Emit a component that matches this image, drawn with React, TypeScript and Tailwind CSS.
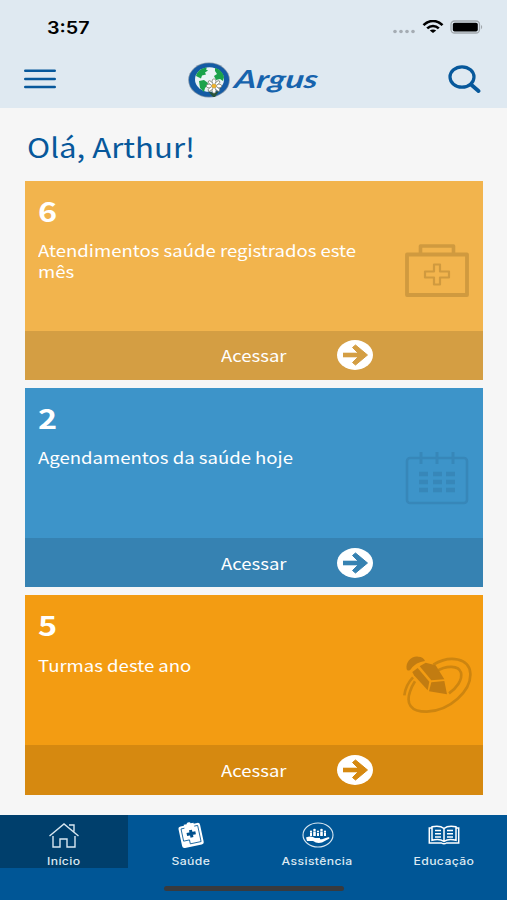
import type { ReactNode } from 'react'

type Card = {
  id: string
  total: number
  label: string
  bg: string
  footer: string
  arrow: string
  icon: ReactNode
}

function KitIcon() {
  return (
    <svg viewBox="0 0 64 54" className="w-16 h-[54px]" fill="none" stroke="#d09a3f" strokeLinejoin="round">
      <path d="M2 10.500h60v40.500H2z" strokeWidth="3.800" />
      <path d="M15.500 9V2h33v7" strokeWidth="3.600" />
      <path d="M29 20.500h6v7h9v6h-9v7h-6v-7h-9v-6h9z" strokeWidth="2.200" />
    </svg>
  )
}

function CalendarIcon() {
  return (
    <svg viewBox="0 0 64 54" className="w-16 h-[54px]" fill="none" stroke="#3787b9">
      <rect x="2" y="7" width="60" height="45" rx="3" strokeWidth="2.600" />
      <path d="M16 1v12M32 1v12M48 1v12" strokeWidth="3" />
      <path d="M14 23h9M28 23h9M41 23h9M14 31h9M28 31h9M41 31h9M14 39h9M28 39h9M41 39h9" strokeWidth="4.500" />
    </svg>
  )
}

function PencilIcon() {
  return (
    <svg viewBox="36 45 210 177" className="w-[70px] h-[59px] -mr-[3px] -mt-[3px]" fill="none">
      <g stroke="#cd8510" strokeWidth="8">
        <path d="M130 74C180 44 238 54 241 100c3 52-61 113-131 115-50 0-62-26-50-60 4-12 9-22 15-31" />
        <path d="M138 94c32-19 68-18 75 4 5 22-13 46-36 62M43 166c3-22 12-40 26-54" />
      </g>
      <g fill="#c27c11">
        <path d="M50 88C46 66 64 48 84 50c12 0 19 6 21 13-18 3-32 10-42 24-4 5-10 7-13 1z" />
        <path d="M89 79l18-11 30 8 26 42-39 3z" />
        <path d="M67 96l16-12 35 41-5 26-41-45z" />
        <path d="M124 127l39-4 8 40-54-9z" />
      </g>
    </svg>
  )
}

const CARDS: Card[] = [
  { id: 'atendimentos', total: 6, label: 'Atendimentos saúde registrados este mês', bg: 'bg-[#f2b44d]', footer: 'bg-[#d49e43]', arrow: 'text-[#d49e43]', icon: <KitIcon /> },
  { id: 'agendamentos', total: 2, label: 'Agendamentos da saúde hoje', bg: 'bg-[#3d94c9]', footer: 'bg-[#3682b2]', arrow: 'text-[#3682b2]', icon: <CalendarIcon /> },
  { id: 'turmas', total: 5, label: 'Turmas deste ano', bg: 'bg-[#f39c12]', footer: 'bg-[#d68910]', arrow: 'text-[#d68910]', icon: <PencilIcon /> },
]

function StatusBar() {
  return (
    <div className="h-[54px] pl-[47px] pr-6 flex items-center justify-between">
      <span className="inline-block pt-[3px] origin-left scale-x-[1.16] font-['Inter',sans-serif] text-[17px] font-semibold text-black">3:57</span>
      <div className="flex items-center">
        <svg viewBox="0 0 24 14" className="w-6 h-3.5 mr-1.5" fill="#a5acb3">
          <circle cx="3" cy="11.500" r="1.800" />
          <circle cx="9" cy="11.500" r="1.800" />
          <circle cx="15" cy="11.500" r="1.800" />
          <circle cx="21" cy="11.500" r="1.800" />
        </svg>
        <svg viewBox="0 0 22 14" className="w-[22px] h-3.5 mr-[6px]" fill="none" stroke="#000" strokeWidth="2.600">
          <path d="M1.500 5.200C7-.4 15-.4 20.500 5.200M5.200 8.400c3.400-3.300 8.200-3.300 11.600 0" />
          <path d="M11 13 7.800 10.500c1.900-1.500 4.500-1.500 6.400 0z" fill="#000" stroke="none" />
        </svg>
        <svg viewBox="0 0 33 14" className="w-[33px] h-3.5">
          <rect x="1" y="1" width="28.500" height="12" rx="3.500" fill="none" stroke="#a2a8ad" strokeWidth="1.300" />
          <rect x="2.800" y="2.700" width="25" height="8.800" rx="1.800" fill="#000" />
          <path d="M31 5c1.600.6 1.600 3.600 0 4.200z" fill="#a2a8ad" />
        </svg>
      </div>
    </div>
  )
}

function Logo() {
  return (
    <div className="flex items-center pl-[3px] pt-[2px]">
      <svg viewBox="0 0 42 36" className="w-[42px] h-9">
        <ellipse cx="21" cy="18" rx="20.800" ry="17.500" fill="#7f93a8" />
        <ellipse cx="21" cy="18" rx="20" ry="16.700" fill="#145ba4" />
        <ellipse cx="21.500" cy="17.500" rx="14.500" ry="12.300" fill="#eaf3f5" />
        <path d="M8 14c1-5 6-8 11-8.500l-1 2 2 1-3 2 1 2-4 1-1 3-2-1zM27 6c5 1 8 5 9 9l-1 4-3-2-4 1-2-4 3-2-2-3zM11 19l5-1 4 3-1 3-2 2-1 4-4-4z" fill="#1ba34a" />
        <path d="M20 29l5 2 6-2-4 6h-2z" fill="#28543a" />
        <g fill="#fff" stroke="#6b705f" strokeWidth=".7">
          <ellipse cx="26" cy="19.800" rx="2" ry="3" />
          <ellipse cx="26" cy="28.300" rx="2" ry="3" />
          <ellipse cx="21.300" cy="24" rx="3" ry="1.900" />
          <ellipse cx="30.700" cy="24" rx="3" ry="1.900" />
          <ellipse cx="22.600" cy="21" rx="2.900" ry="1.500" transform="rotate(42 22.600 21)" />
          <ellipse cx="29.400" cy="21" rx="2.900" ry="1.500" transform="rotate(-42 29.400 21)" />
          <ellipse cx="22.600" cy="27" rx="2.900" ry="1.500" transform="rotate(-42 22.600 27)" />
          <ellipse cx="29.400" cy="27" rx="2.900" ry="1.500" transform="rotate(42 29.400 27)" />
        </g>
        <ellipse cx="26" cy="24" rx="2.400" ry="2" fill="#efb22c" />
      </svg>
      <div className="w-[86px] pl-[5px] pb-[4px]">
        <span className="inline-block origin-left scale-x-[1.36] -skew-x-6 font-['Lato',sans-serif] text-[25px] leading-8 font-bold italic text-[#1763ad]">Argus</span>
      </div>
    </div>
  )
}

function Header() {
  return (
    <header className="h-[108px] bg-[#dfe9f1]">
      <StatusBar />
      <div className="h-[50px] pl-6 pr-[26px] flex items-center justify-between">
        <button type="button" title="Menu">
          <svg viewBox="0 0 32 20" className="w-8 h-5" stroke="#07589b" strokeWidth="2.600" strokeLinecap="round">
            <path d="M1.300 1.800h29.400M1.300 10h29.400M1.300 18h29.400" />
          </svg>
        </button>
        <Logo />
        <button type="button" title="Buscar">
          <svg viewBox="0 0 36 28" className="w-9 h-7" fill="none" stroke="#07589b" strokeLinecap="round">
            <ellipse cx="17" cy="12" rx="12" ry="10.200" strokeWidth="3.200" />
            <path d="m26 19.500 7.500 6.500" strokeWidth="3.800" />
          </svg>
        </button>
      </div>
    </header>
  )
}

function SummaryCard({ card }: { card: Card }) {
  return (
    <section className={`h-[199.300px] flex flex-col text-white ${card.bg}`}>
      <div className="h-[150px] pl-[13px] pr-[14px] flex justify-between">
        <div className="w-[285px] pt-[14px]">
          <p className="origin-left scale-x-[1.2] text-[27px] leading-8 font-bold">{card.total}</p>
          <p className="w-[280px] mt-[13.400px] origin-left scale-x-[1.16] text-[16px] leading-[21px]">{card.label}</p>
        </div>
        <div className="pt-[63px]">{card.icon}</div>
      </div>
      <button type="button" className={`flex-1 pl-[196px] flex items-center ${card.footer}`}>
        <span className="w-[116px] text-left">
          <span className="inline-block origin-left scale-x-[1.158] text-[16px] leading-6">Acessar</span>
        </span>
        <svg viewBox="0 0 36 30" className={`w-9 h-[30px] ${card.arrow}`}>
          <ellipse cx="18" cy="15" rx="18" ry="15" fill="#fff" />
          <path d="M6 15h18" fill="none" stroke="currentColor" strokeWidth="4.600" />
          <path d="M15.500 7.500 18.500 5 30.500 15 18.500 25 15.500 22.500 21 17v-4z" fill="currentColor" stroke="currentColor" strokeWidth="1" strokeLinejoin="round" />
        </svg>
      </button>
    </section>
  )
}

function HomeIcon() {
  return (
    <svg viewBox="0 0 32 26" className="w-8 h-[26px]" fill="none" stroke="#d8e7f1" strokeWidth="1.400">
      <path d="M1.500 14 16 2l14.500 12M21 3h5v6.500M5 14v11h7v-8h7v8h8V14" />
    </svg>
  )
}

function ClipboardIcon() {
  return (
    <svg viewBox="0 0 30 28" className="w-[30px] h-7">
      <g transform="rotate(-12 15 14)">
        <rect x="4" y="3.500" width="22" height="22" rx="2.500" fill="#fff" />
        <path d="M10 5V2.500h3c0-2 4-2 4 0h3V5z" fill="#fff" />
        <path d="M10 6H6.500v12.500h6v4h11V6H20" fill="none" stroke="#005696" strokeWidth=".8" />
        <path d="M15.500 9v7.500M11 12.700h9" stroke="#004f8c" strokeWidth="3" />
      </g>
    </svg>
  )
}

function AssistIcon() {
  return (
    <svg viewBox="0 0 32 26" className="w-8 h-[26px]">
      <ellipse cx="16" cy="13" rx="15" ry="12" fill="none" stroke="#d8e7f1" strokeWidth="1.100" />
      <g fill="#fff">
        <circle cx="9" cy="9.500" r="1.100" />
        <circle cx="12.500" cy="8" r="1.300" />
        <circle cx="16" cy="9.500" r="1.100" />
        <circle cx="19.500" cy="8" r="1.300" />
        <circle cx="23" cy="9.500" r="1.100" />
        <path d="M8 10.500h2V14H8zM11.200 9.500h2.600V14h-2.600zM15 11h2v3h-2zM18.200 9.500h2.600V14h-2.600zM22 10.500h2V14h-2z" />
        <path d="M4 15.500c4-2 7-1 9 .5h5v1.300h2l6-2c1.500 0 2 .7 1 1.500l-7 3.700c-4 1-6 .3-9-1.500H5z" />
      </g>
    </svg>
  )
}

function BookIcon() {
  return (
    <svg viewBox="0 0 32 20" className="w-8 h-5" fill="none" stroke="#fff" strokeWidth="1.500">
      <path d="M16 3.500C13 1 8 1 4 1.800v13.400c4-1 9-1 12 1.300 3-2.300 8-2.300 12-1.300V1.800C24 1 19 1 16 3.500zM16 3.500v13" />
      <path d="M4 3H1.300v15h12.200c1.500 1 3.500 1 5 0h12.200V3H28" />
      <path d="M7 5.500h6M7 8.700h6M7 11.900h6M25 5.500h-6M25 8.700h-6M25 11.900h-6" strokeWidth="1.500" />
    </svg>
  )
}

const TABS = [
  { label: 'Início', icon: <HomeIcon /> },
  { label: 'Saúde', icon: <ClipboardIcon /> },
  { label: 'Assistência', icon: <AssistIcon /> },
  { label: 'Educação', icon: <BookIcon /> },
]

export default function App() {
  const active = 'Início'

  return (
    <div className="w-[507px] h-[900px] overflow-hidden flex flex-col bg-[#f6f6f6] font-['Noto_Sans_CJK_SC','Noto_Sans',sans-serif]">
      <Header />

      <main className="flex-1 px-[25px]">
        <div className="h-[72.700px] pt-[19px] pl-[2px]">
          <h1 className="inline-block origin-left scale-x-[1.155] text-[27px] leading-10 text-[#07589b] whitespace-nowrap">Olá, Arthur!</h1>
        </div>
        <div className="w-[457.500px] flex flex-col gap-2">
          {CARDS.map(c => <SummaryCard key={c.id} card={c} />)}
        </div>
      </main>

      {/* Bottom tabs */}
      <nav className="h-[85px] bg-[#005696]">
        <div className="h-[53px] grid grid-cols-[128px_126px_127px_126px]">
          {TABS.map(t => (
            <button key={t.label} type="button" className={`flex flex-col items-center ${t.label === active ? 'bg-[#003f6c]' : ''}`}>
              <span className="h-10 flex items-center justify-center">{t.icon}</span>
              <span className="inline-block scale-x-[1.22] font-['Inter',sans-serif] text-[10px] leading-[13px] font-medium tracking-[0.3px] text-[#dce9f2]">{t.label}</span>
            </button>
          ))}
        </div>
        <div className="mt-[18px] ml-[164px] w-[180px] h-[5px] rounded-full bg-[#383a3e]" />
      </nav>
    </div>
  )
}
